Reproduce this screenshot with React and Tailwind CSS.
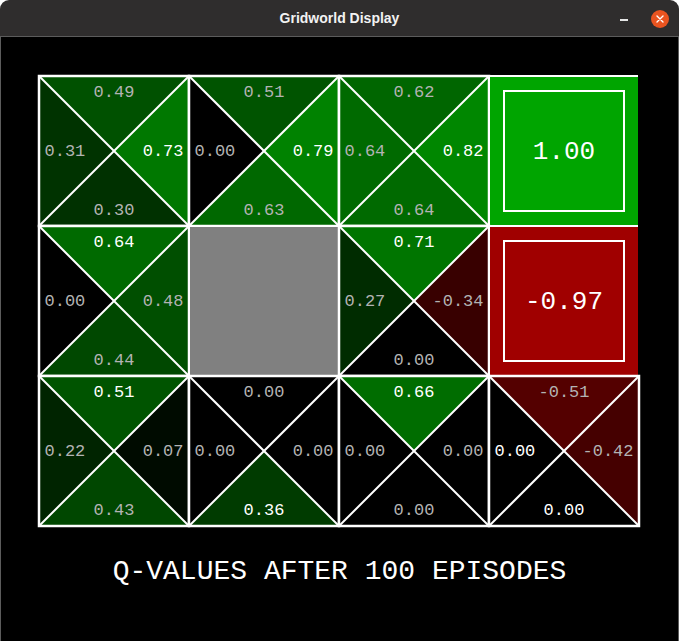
import React from 'react'

// q-values per state: [N, E, S, W]; 'wall' and numbers for terminals
const board = [
  [[0.49, 0.73, 0.30, 0.31], [0.51, 0.79, 0.63, 0.0], [0.62, 0.82, 0.64, 0.64], 1.0],
  [[0.64, 0.48, 0.44, 0.0], 'wall', [0.71, -0.34, 0.0, 0.27], -0.97],
  [[0.51, 0.07, 0.43, 0.22], [0.0, 0.0, 0.36, 0.0], [0.66, 0.0, 0.0, 0.0], [-0.51, -0.42, 0.0, 0.0]],
]

function valueColor(v) {
  const c = Math.floor(Math.abs(v) * 0.65 * 255)
  const hex = c.toString(16).padStart(2, '0')
  if (v < 0) return `#${hex}0000`
  if (v > 0) return `#00${hex}00`
  return '#000000'
}

const fmt = (v) => v.toFixed(2)

const MONO = "'Liberation Mono', 'DejaVu Sans Mono', monospace"

function QCell({ q }) {
  const [n, e, s, w] = q
  const best = Math.max(...q)
  const col = (v) => (v < best ? '#b3b3b3' : '#ffffff')
  const tris = [
    ['1,1 151,1 76,76', n],
    ['151,1 151,151 76,76', e],
    ['1,151 151,151 76,76', s],
    ['1,1 1,151 76,76', w],
  ]
  return (
    <svg width="152" height="152" className="block overflow-visible">
      {tris.map(([pts, v], i) => (
        <polygon key={i} points={pts} fill={valueColor(v)} />
      ))}
      <line x1="1" y1="1" x2="151" y2="151" stroke="white" strokeWidth="2" />
      <line x1="151" y1="1" x2="1" y2="151" stroke="white" strokeWidth="2" />
      <rect x="1" y="1" width="150" height="150" fill="none" stroke="white" strokeWidth="2.5" />
      <g fontFamily={MONO} fontSize="17" dominantBaseline="central">
        <text x="76" y="17" textAnchor="middle" fill={col(n)}>{fmt(n)}</text>
        <text x="145.5" y="76" textAnchor="end" fill={col(e)}>{fmt(e)}</text>
        <text x="76" y="135.5" textAnchor="middle" fill={col(s)}>{fmt(s)}</text>
        <text x="6.5" y="76" textAnchor="start" fill={col(w)}>{fmt(w)}</text>
      </g>
    </svg>
  )
}

function TerminalCell({ value }) {
  return (
    <svg width="152" height="152" className="block overflow-visible">
      <rect x="2" y="2" width="148" height="148" fill={valueColor(value)} />
      <polyline points="1,151 1,1 150,1" fill="none" stroke="white" strokeWidth="2" />
      <rect x="16" y="16" width="120" height="120" fill="none" stroke="white" strokeWidth="2" />
      <text x="76" y="77" textAnchor="middle" dominantBaseline="central" fontFamily={MONO} fontSize="26" fill="white">
        {fmt(value)}
      </text>
    </svg>
  )
}

function WallCell() {
  return (
    <svg width="152" height="152" className="block overflow-visible">
      <rect x="1" y="1" width="150" height="150" fill="#808080" stroke="white" strokeWidth="2" />
    </svg>
  )
}

export default function App() {
  return (
    <div className="w-[679px] h-[641px] bg-white">
      <div className="h-full flex flex-col rounded-t-[9px] overflow-hidden">
        <div className="h-[37px] bg-[#2f2d2d] flex items-center relative flex-shrink-0 border-b border-[#5c5c5c]">
          <span
            className="flex-1 text-center text-[14px] font-bold text-[#f2f2f2]"
            style={{ fontFamily: "'Liberation Sans', 'Noto Sans', sans-serif" }}
          >
            Gridworld Display
          </span>
          <div className="absolute right-[10px] top-[10px] flex items-center gap-[23px]">
            <div className="w-[8px] h-[2px] bg-[#e6e6e6] mt-[2px]" />
            <div className="w-[18px] h-[18px] rounded-full bg-[#e95420] flex items-center justify-center">
              <svg width="8" height="8" viewBox="0 0 8 8">
                <path d="M1 1 L7 7 M7 1 L1 7" stroke="white" strokeWidth="1.4" strokeLinecap="round" />
              </svg>
            </div>
          </div>
        </div>
        <div className="flex-1 bg-black border-x border-[#5c5c5c] pt-[38px] pl-[37px]">
          <div className="grid grid-cols-[repeat(4,150px)] grid-rows-[repeat(3,150px)]">
            {board.map((row, r) =>
              row.map((cell, c) => {
                const key = `${r}-${c}`
                if (cell === 'wall') return <WallCell key={key} />
                if (typeof cell === 'number') return <TerminalCell key={key} value={cell} />
                return <QCell key={key} q={cell} />
              })
            )}
          </div>
          <div
            className="mt-[33px] -ml-[37px] text-center text-white text-[28px] leading-[28px] whitespace-pre"
            style={{ fontFamily: MONO }}
          >
            Q-VALUES AFTER 100 EPISODES
          </div>
        </div>
      </div>
    </div>
  )
}
